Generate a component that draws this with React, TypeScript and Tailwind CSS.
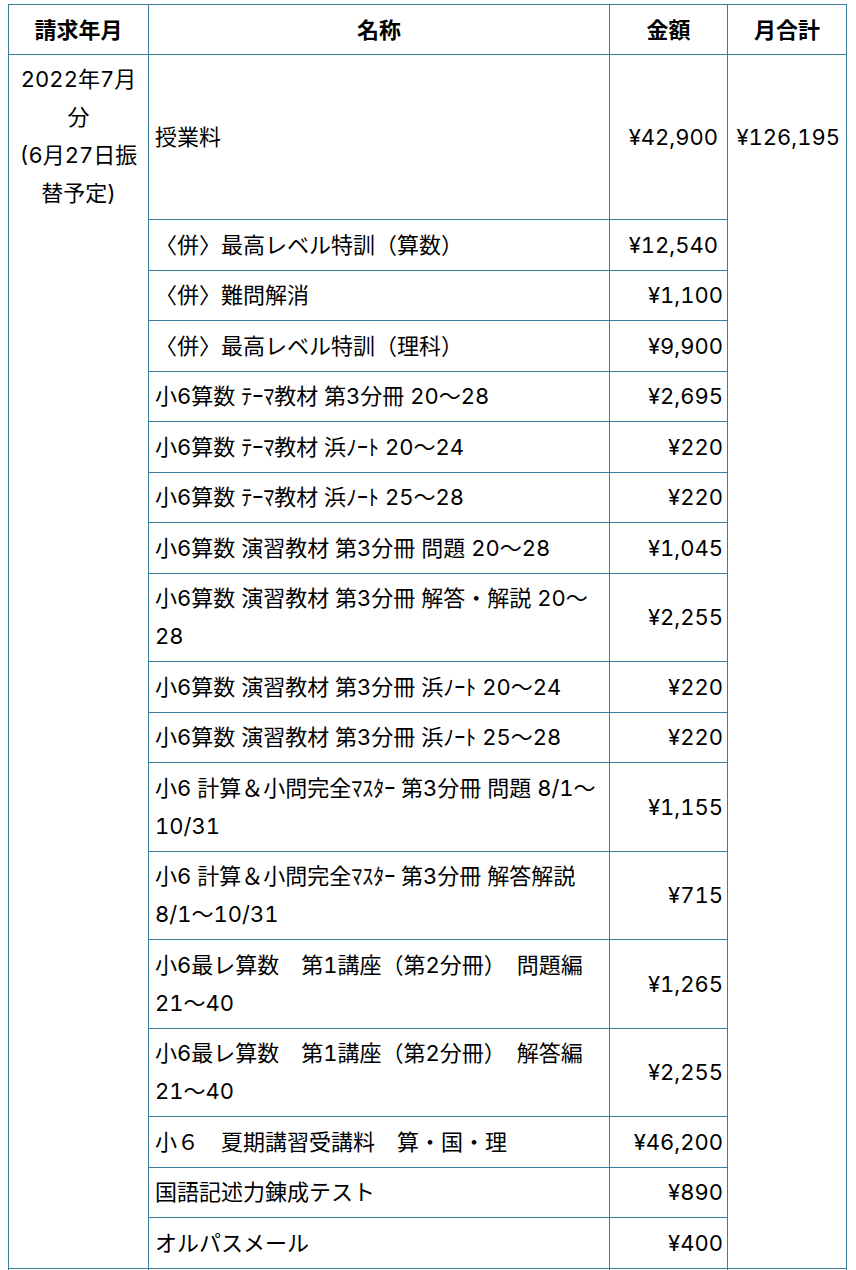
import React from "react";

type Row = { name: string[]; amt: string; pr?: boolean };

const rows: Row[] = [
  { name: ["〈併〉最高レベル特訓（算数）"], amt: "¥12,540", pr: true },
  { name: ["〈併〉難問解消"], amt: "¥1,100" },
  { name: ["〈併〉最高レベル特訓（理科）"], amt: "¥9,900" },
  { name: ["小6算数 ﾃｰﾏ教材 第3分冊 20〜28"], amt: "¥2,695" },
  { name: ["小6算数 ﾃｰﾏ教材 浜ﾉｰﾄ 20〜24"], amt: "¥220" },
  { name: ["小6算数 ﾃｰﾏ教材 浜ﾉｰﾄ 25〜28"], amt: "¥220" },
  { name: ["小6算数 演習教材 第3分冊 問題 20〜28"], amt: "¥1,045" },
  { name: ["小6算数 演習教材 第3分冊 解答・解説 20〜", "28"], amt: "¥2,255" },
  { name: ["小6算数 演習教材 第3分冊 浜ﾉｰﾄ 20〜24"], amt: "¥220" },
  { name: ["小6算数 演習教材 第3分冊 浜ﾉｰﾄ 25〜28"], amt: "¥220" },
  { name: ["小6 計算＆小問完全ﾏｽﾀｰ 第3分冊 問題 8/1〜", "10/31"], amt: "¥1,155" },
  { name: ["小6 計算＆小問完全ﾏｽﾀｰ 第3分冊 解答解説", "8/1〜10/31"], amt: "¥715" },
  { name: ["小6最レ算数　第1講座（第2分冊）　問題編", "21〜40"], amt: "¥1,265" },
  { name: ["小6最レ算数　第1講座（第2分冊）　解答編", "21〜40"], amt: "¥2,255" },
  { name: ["小６　夏期講習受講料　算・国・理"], amt: "¥46,200" },
  { name: ["国語記述力錬成テスト"], amt: "¥890" },
  { name: ["オルパスメール"], amt: "¥400" },
];

const cell = "border-r border-b border-[#3d7c99]";

export default function App() {
  return (
    <div className="bg-white min-h-[1270px] pt-[4px] font-['Inter','Noto_Sans_CJK_JP',sans-serif] text-[22px] leading-[38px] text-black tabular-nums">
      <div className="ml-2 w-[839px] grid grid-cols-[140px_461px_118px_119px] border-l border-t border-[#3d7c99]">
        {/* header */}
        <div className={`${cell} font-bold text-center py-[5.5px]`}>請求年月</div>
        <div className={`${cell} font-bold text-center py-[5.5px]`}>名称</div>
        <div className={`${cell} font-bold text-center py-[5.5px]`}>金額</div>
        <div className={`${cell} font-bold text-center py-[5.5px]`}>月合計</div>

        {/* spanning cells */}
        <div className={`${cell} [grid-column:1] [grid-row:2/20] text-center pt-[5px]`}>
          2022年7月
          <br />分
          <br />
          (6月27日振
          <br />
          替予定)
        </div>
        <div className={`${cell} [grid-column:4] [grid-row:2/20]`}>
          <div className="h-[164px] flex items-center justify-end pr-[6px]">¥126,195</div>
        </div>

        {/* first data row */}
        <div className={`${cell} min-h-[165px] flex items-center pl-[6px]`}>授業料</div>
        <div className={`${cell} min-h-[165px] flex items-center justify-end pr-[9px]`}>¥42,900</div>

        {rows.map((r, i) => (
          <React.Fragment key={i}>
            <div className={`${cell} py-[5.75px] pl-[6px] pr-[4px] whitespace-nowrap`}>
              {r.name.map((l, j) => (
                <div key={j}>{l}</div>
              ))}
            </div>
            <div
              className={`${cell} py-[5.75px] flex items-center justify-end ${r.pr ? "pr-[9px]" : "pr-[4px]"}`}
            >
              {r.amt}
            </div>
          </React.Fragment>
        ))}

        {/* next section (cut off) */}
        <div className={`${cell} h-[60px]`}></div>
        <div className={`${cell} h-[60px]`}></div>
        <div className={`${cell} h-[60px]`}></div>
        <div className={`${cell} h-[60px]`}></div>
      </div>
    </div>
  );
}
